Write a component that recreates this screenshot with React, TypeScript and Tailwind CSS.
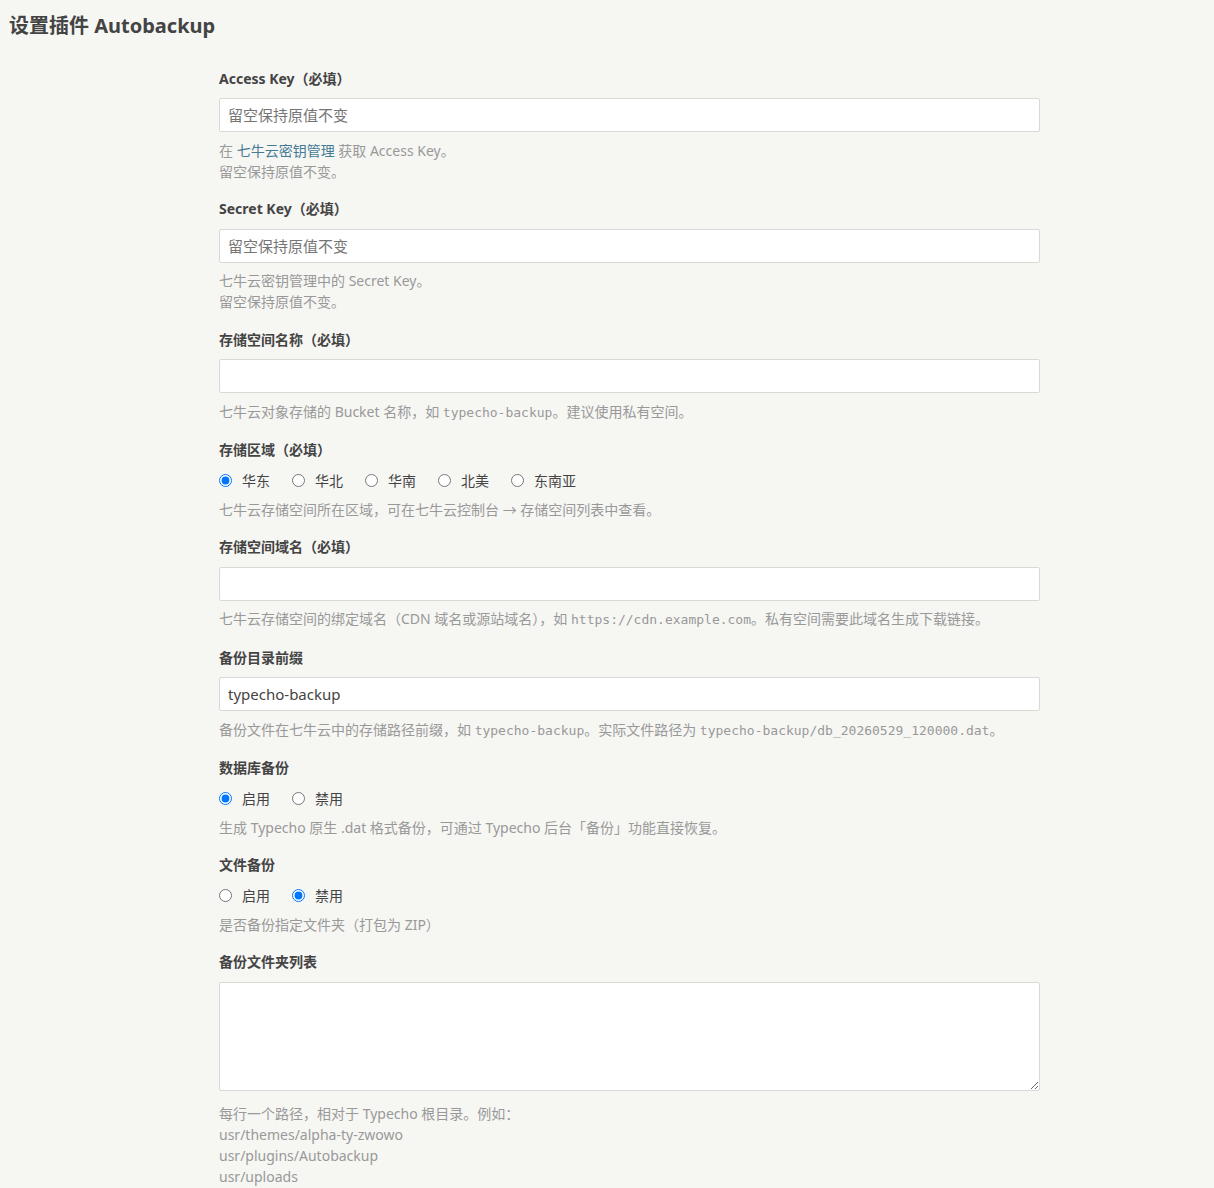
import React from 'react';

const font = { fontFamily: '"Noto Sans", "Noto Sans CJK SC", sans-serif' };

const Code: React.FC<{ children: React.ReactNode }> = ({ children }) => (
  <code className="font-['DejaVu_Sans_Mono',monospace] text-[13px]">{children}</code>
);

const Label: React.FC<{ children: React.ReactNode }> = ({ children }) => (
  <label className="block text-[14px] leading-[21px] font-bold text-[#444] mb-[9.5px]">{children}</label>
);

const Desc: React.FC<{ children: React.ReactNode; className?: string }> = ({ children, className }) => (
  <p className={`text-[14px] leading-[21px] text-[#999] ${className ?? 'mt-[7.5px]'}`}>{children}</p>
);

const TextInput: React.FC<{ placeholder?: string; value?: string }> = ({ placeholder, value }) => (
  <input
    type="text"
    placeholder={placeholder}
    defaultValue={value}
    className="block w-full h-[34px] bg-white border border-[#D9D9D6] rounded-[2px] pl-2 pr-2 text-[15px] text-[#444] placeholder:text-[#757575] outline-none"
  />
);

const Radios: React.FC<{ name: string; options: string[]; checked: number }> = ({ name, options, checked }) => (
  <div className="flex items-center h-[21px] mt-[1.5px] text-[14px] text-[#444]">
    {options.map((o, i) => (
      <label key={o} className="inline-flex items-center mr-[22px]">
        <input type="radio" name={name} defaultChecked={i === checked} className="m-0 w-[13px] h-[13px]" />
        <span className="ml-[10px] leading-[21px]">{o}</span>
      </label>
    ))}
  </div>
);

export default function App() {
  return (
    <div className="min-h-screen bg-[#F6F6F3] text-[#444]" style={font}>
      <h2 className="pl-[9px] pt-[11px] text-[20px] leading-[30px] font-bold text-[#444]">设置插件 Autobackup</h2>

      <div className="ml-[219px] w-[821px] mt-[26.5px] flex flex-col gap-[16.5px]">
        <div>
          <Label>Access Key（必填）</Label>
          <TextInput placeholder="留空保持原值不变" />
          <Desc>
            在 <a className="text-[#467B96]">七牛云密钥管理</a> 获取 Access Key。
            <br />
            留空保持原值不变。
          </Desc>
        </div>

        <div>
          <Label>Secret Key（必填）</Label>
          <TextInput placeholder="留空保持原值不变" />
          <Desc>
            七牛云密钥管理中的 Secret Key。
            <br />
            留空保持原值不变。
          </Desc>
        </div>

        <div>
          <Label>存储空间名称（必填）</Label>
          <TextInput />
          <Desc>
            七牛云对象存储的 Bucket 名称，如 <Code>typecho-backup</Code>。建议使用私有空间。
          </Desc>
        </div>

        <div>
          <Label>存储区域（必填）</Label>
          <Radios name="region" options={['华东', '华北', '华南', '北美', '东南亚']} checked={0} />
          <Desc className="mt-[8px]">七牛云存储空间所在区域，可在七牛云控制台 → 存储空间列表中查看。</Desc>
        </div>

        <div>
          <Label>存储空间域名（必填）</Label>
          <TextInput />
          <Desc>
            七牛云存储空间的绑定域名（CDN 域名或源站域名），如 <Code>https://cdn.example.com</Code>。私有空间需要此域名生成下载链接。
          </Desc>
        </div>

        <div>
          <Label>备份目录前缀</Label>
          <TextInput value="typecho-backup" />
          <Desc>
            备份文件在七牛云中的存储路径前缀，如 <Code>typecho-backup</Code>。实际文件路径为 <Code>typecho-backup/db_20260529_120000.dat</Code>。
          </Desc>
        </div>

        <div>
          <Label>数据库备份</Label>
          <Radios name="db" options={['启用', '禁用']} checked={0} />
          <Desc className="mt-[8px]">生成 Typecho 原生 .dat 格式备份，可通过 Typecho 后台「备份」功能直接恢复。</Desc>
        </div>

        <div>
          <Label>文件备份</Label>
          <Radios name="files" options={['启用', '禁用']} checked={1} />
          <Desc className="mt-[8px]">是否备份指定文件夹（打包为 ZIP）</Desc>
        </div>

        <div>
          <Label>备份文件夹列表</Label>
          <textarea className="block w-full h-[109px] bg-white border border-[#D9D9D6] rounded-[2px] p-2 text-[15px] text-[#444] outline-none" />
          <Desc className="mt-[12.5px]">
            每行一个路径，相对于 Typecho 根目录。例如：
            <br />
            usr/themes/alpha-ty-zwowo
            <br />
            usr/plugins/Autobackup
            <br />
            usr/uploads
          </Desc>
        </div>
      </div>
    </div>
  );
}
